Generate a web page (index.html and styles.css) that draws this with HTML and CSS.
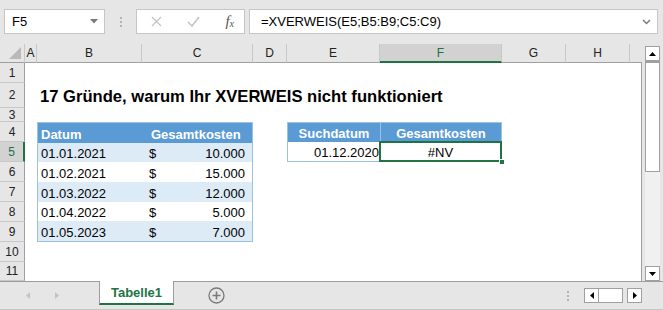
FILE: index.html
```html
<!DOCTYPE html>
<html lang="de">
<head>
    <meta charset="UTF-8">
    <title>XVERWEIS</title>
    <link rel="stylesheet" href="styles.css">
</head>
<body>
    <div class="toolbar">
        <div class="namebox">
            <span>F5</span>
            <svg class="drop" width="8" height="5" viewBox="0 0 8 5"><path d="M0 0h8L4 4.5z" fill="#7a7a7a"/></svg>
        </div>
        <div class="grip"><i></i><i></i><i></i></div>
        <div class="fxbox">
            <svg width="11" height="11" viewBox="0 0 11 11"><path d="M1 1l9 9M10 1l-9 9" stroke="#c4c4c4" stroke-width="1.3"/></svg>
            <svg width="13" height="11" viewBox="0 0 13 11"><path d="M1 6l4 4 7-9" stroke="#c4c4c4" stroke-width="1.6" fill="none"/></svg>
            <span class="fx">f<sub>x</sub></span>
        </div>
        <div class="formula">
            <span>=XVERWEIS(E5;B5:B9;C5:C9)</span>
            <svg width="9" height="6" viewBox="0 0 9 6"><path d="M1 1l3.5 3.5L8 1" stroke="#7a7a7a" stroke-width="1.5" fill="none"/></svg>
        </div>
    </div>

    <div class="main">
        <div class="sheet">
            <div class="corner"></div>
            <div class="colh">A</div>
            <div class="colh">B</div>
            <div class="colh">C</div>
            <div class="colh">D</div>
            <div class="colh">E</div>
            <div class="colh active">F</div>
            <div class="colh">G</div>
            <div class="colh">H</div>
            <div class="colh last"></div>

            <div class="rowh" style="grid-row: 2">1</div>
            <div class="rowh" style="grid-row: 3">2</div>
            <div class="rowh" style="grid-row: 4">3</div>
            <div class="rowh" style="grid-row: 5">4</div>
            <div class="rowh active" style="grid-row: 6">5</div>
            <div class="rowh" style="grid-row: 7">6</div>
            <div class="rowh" style="grid-row: 8">7</div>
            <div class="rowh" style="grid-row: 9">8</div>
            <div class="rowh" style="grid-row: 10">9</div>
            <div class="rowh" style="grid-row: 11">10</div>
            <div class="rowh" style="grid-row: 12">11</div>

            <div class="edge"></div>

            <h1 class="title">17 Gründe, warum Ihr XVERWEIS nicht funktioniert</h1>

            <div class="tbl costs">
                <div class="th left">Datum</div>
                <div class="th kost">Gesamtkosten</div>
                <div class="td date band">01.01.2021</div>
                <div class="td money band"><span>$</span><span>10.000</span></div>
                <div class="td date">01.02.2021</div>
                <div class="td money"><span>$</span><span>15.000</span></div>
                <div class="td date band">01.03.2022</div>
                <div class="td money band"><span>$</span><span>12.000</span></div>
                <div class="td date">01.04.2022</div>
                <div class="td money"><span>$</span><span>5.000</span></div>
                <div class="td date band">01.05.2023</div>
                <div class="td money band"><span>$</span><span>7.000</span></div>
            </div>

            <div class="tbl lookup">
                <div class="th center">Suchdatum</div>
                <div class="th center">Gesamtkosten</div>
                <div class="td search">01.12.2020</div>
                <div class="td result">#NV<i class="handle"></i></div>
            </div>
        </div>

        <div class="vscroll">
            <div class="sbtn"><svg width="7" height="4" viewBox="0 0 7 4"><path d="M0 4h7L3.5 0z" fill="#000"/></svg></div>
            <div class="vthumb"></div>
            <div class="vtrack"></div>
            <div class="sbtn"><svg width="7" height="4" viewBox="0 0 7 4"><path d="M0 0h7L3.5 4z" fill="#000"/></svg></div>
        </div>
    </div>

    <div class="tabbar">
        <div class="nav">
            <svg width="4" height="7" viewBox="0 0 4 7"><path d="M4 0v7L0 3.5z" fill="#c3c3c3"/></svg>
            <svg width="4" height="7" viewBox="0 0 4 7"><path d="M0 0v7L4 3.5z" fill="#c3c3c3"/></svg>
        </div>
        <div class="tab">Tabelle1</div>
        <svg class="addsheet" width="17" height="17" viewBox="0 0 17 17">
            <circle cx="8.5" cy="8.5" r="7.5" fill="none" stroke="#7a7a7a" stroke-width="1.3"/>
            <path d="M8.5 4.5v8M4.5 8.5h8" stroke="#7a7a7a" stroke-width="1.6"/>
        </svg>
        <div class="grip small"><i></i><i></i><i></i></div>
        <div class="hscroll">
            <div class="hbtn"><svg width="4" height="7" viewBox="0 0 4 7"><path d="M4 0v7L0 3.5z" fill="#000"/></svg></div>
            <div class="hthumb"></div>
            <div class="hbtn"><svg width="4" height="7" viewBox="0 0 4 7"><path d="M0 0v7L4 3.5z" fill="#000"/></svg></div>
        </div>
    </div>
</body>
</html>
```

FILE: styles.css
```css
* {
    box-sizing: border-box;
    margin: 0;
    padding: 0;
}

body {
    width: 663px;
    height: 310px;
    overflow: hidden;
    background: #e6e6e6;
    font-family: 'Liberation Sans', Arial, sans-serif;
    font-size: 13px;
    color: #000;
}

/* Formula bar */
.toolbar {
    display: flex;
    height: 44px;
    padding: 9px 0 0 4px;
}

.namebox,
.fxbox,
.formula {
    height: 25px;
    background: #fff;
    border: 1px solid #c6c6c6;
    display: flex;
    align-items: center;
}

.namebox {
    width: 101px;
    padding: 0 6px 0 7px;
    justify-content: space-between;
}

.grip {
    width: 31px;
    display: flex;
    flex-direction: column;
    align-items: center;
    padding-top: 8px;
    gap: 2px;
}

.grip i {
    display: block;
    width: 2px;
    height: 2px;
    background: #b4b4b4;
}

.fxbox {
    width: 109px;
    padding: 0 10px 0 14px;
    justify-content: space-between;
}

.fx {
    font-family: 'Liberation Serif', serif;
    font-style: italic;
    font-size: 15px;
    color: #555;
}

.fx sub {
    font-size: 10px;
    vertical-align: -1px;
}

.formula {
    width: 409px;
    margin-left: 4px;
    padding: 0 6px 0 11px;
    justify-content: space-between;
}

/* Sheet */
.main {
    display: flex;
    height: 237px;
}

.sheet {
    width: 642px;
    display: grid;
    grid-template-columns: 25px 12px 105px 111px 34px 93px 122px 64px 64px 12px;
    grid-template-rows: 19px 20px 25px 14px repeat(7, 20px) 19px;
    background: #fff;
}

.corner,
.colh {
    grid-row: 1;
    background: #e6e6e6;
    border-bottom: 1px solid #9f9f9f;
}

.corner {
    border-right: 1px solid #c8c8c8;
    position: relative;
}

.corner::after {
    content: "";
    position: absolute;
    right: 3px;
    bottom: 3px;
    border-style: solid;
    border-width: 0 0 12px 12px;
    border-color: transparent transparent #b9b9b9 transparent;
}

.colh {
    border-right: 1px solid #c8c8c8;
    text-align: center;
    font-size: 12px;
    line-height: 19px;
    color: #222;
}

.colh.active {
    background: #d2d2d2;
    color: #217346;
    border-bottom: 2px solid #217346;
}

.colh.last {
    border-right: none;
}

.rowh {
    grid-column: 1;
    background: #e6e6e6;
    border-right: 1px solid #9f9f9f;
    border-bottom: 1px solid #c8c8c8;
    text-align: center;
    font-size: 12px;
    display: flex;
    align-items: center;
    justify-content: center;
    color: #222;
}

.rowh.active {
    background: #d2d2d2;
    color: #217346;
    border-right: 2px solid #217346;
}

.edge {
    grid-column: 10;
    grid-row: 2 / -1;
    border-right: 1px solid #9f9f9f;
}

.title {
    grid-column: 3 / 10;
    grid-row: 3;
    font-size: 16.6px;
    font-weight: bold;
    padding-left: 3px;
    display: flex;
    align-items: flex-end;
    padding-bottom: 2px;
    line-height: 18px;
}

/* Tables */
.tbl {
    display: grid;
    border: 1px solid #9bc2e6;
}

.costs {
    grid-column: 3 / 5;
    grid-row: 5 / 11;
    grid-template-columns: 104px 1fr;
    grid-template-rows: repeat(6, 1fr);
}

.lookup {
    grid-column: 6 / 8;
    grid-row: 5 / 7;
    grid-template-columns: 92px 1fr;
    grid-template-rows: 1fr 1fr;
}

.th,
.td {
    display: flex;
    align-items: flex-end;
    line-height: 16px;
    white-space: nowrap;
}

.th {
    background: #5b9bd5;
    color: #fff;
    font-weight: bold;
}

.th.left {
    padding-left: 3px;
}

.th.kost {
    padding-left: 9px;
}

.th.center {
    justify-content: center;
}

.lookup .th + .th {
    border-left: 1px solid #9bc2e6;
}

.td.band {
    background: #ddebf7;
}

.td.date {
    padding-left: 3px;
}

.td.money {
    justify-content: space-between;
    padding: 0 7px 0 7px;
}

.td.search {
    justify-content: flex-end;
    padding-right: 1px;
}

.td.result {
    justify-content: center;
    position: relative;
    outline: 2px solid #217346;
    outline-offset: -1px;
}

.handle {
    position: absolute;
    right: -4px;
    bottom: -4px;
    width: 6px;
    height: 6px;
    background: #217346;
    border: 1px solid #fff;
}

/* Vertical scrollbar */
.vscroll {
    width: 21px;
    padding: 2px 3px 0 3px;
    display: flex;
    flex-direction: column;
}

.sbtn,
.hbtn {
    background: #fff;
    border: 1px solid #a0a0a0;
    display: flex;
    align-items: center;
    justify-content: center;
}

.sbtn {
    height: 15px;
}

.vthumb {
    height: 111px;
    background: #fff;
    border: 1px solid #a0a0a0;
    border-top: 2px solid #a0a0a0;
}

.vtrack {
    flex: 1;
    background: #f0f0f0;
}

/* Sheet tabs */
.tabbar {
    height: 29px;
    border-top: 1px solid #9d9d9d;
    border-bottom: 1px solid #c6c6c6;
    display: flex;
    align-items: center;
}

.nav {
    width: 99px;
    display: flex;
    gap: 25px;
    padding-left: 26px;
}

.tab {
    align-self: flex-start;
    margin-top: -1px;
    width: 75px;
    height: 24px;
    background: #fff;
    border-left: 1px solid #9d9d9d;
    border-right: 1px solid #9d9d9d;
    border-bottom: 2px solid #217346;
    color: #217346;
    font-weight: bold;
    text-align: center;
    line-height: 23px;
}

.addsheet {
    margin-left: 34px;
}

.grip.small {
    width: 2px;
    margin-left: auto;
    padding-top: 0;
}

.hscroll {
    display: flex;
    height: 15px;
    margin: 0 21px 0 15px;
}

.hbtn {
    width: 15px;
}

.hthumb {
    width: 24px;
    background: #fff;
    border: 1px solid #a0a0a0;
    border-left: none;
    margin-right: 4px;
}
```
